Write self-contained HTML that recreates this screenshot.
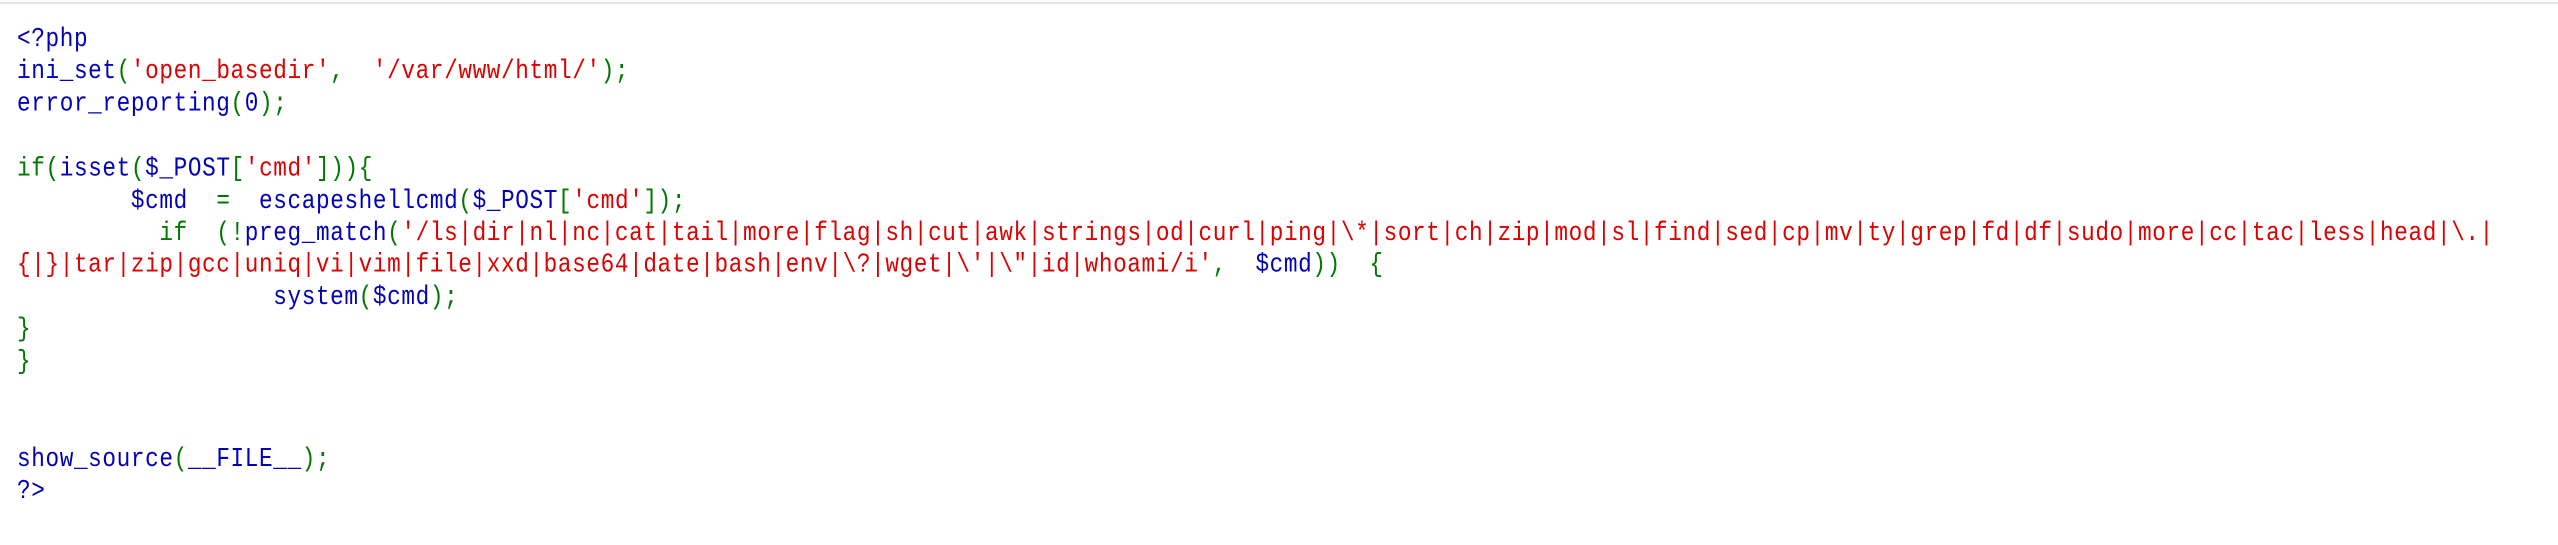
<!DOCTYPE html>
<html><head><meta charset="utf-8"><style>
html,body{margin:0;padding:0;background:#fff;width:2558px;height:545px;overflow:hidden}
.bar{position:absolute;left:0;top:2px;width:2558px;height:2px;background:#e6e6e6}
pre{position:absolute;left:17px;top:22.8px;margin:0;font-family:"Liberation Mono",monospace;font-size:22.7px;letter-spacing:0.62px;line-height:26.92px;white-space:pre;color:#0000BB;transform:scaleY(1.2);transform-origin:0 0}
.g{color:#007700}.r{color:#DD0000}.b{color:#0000BB}
</style></head><body>
<div class="bar"></div>
<pre><span class="b">&lt;?php</span>
<span class="b">ini_set</span><span class="g">(</span><span class="r">'open_basedir'</span><span class="g">,  </span><span class="r">'/var/www/html/'</span><span class="g">);</span>
<span class="b">error_reporting</span><span class="g">(</span><span class="b">0</span><span class="g">);</span>

<span class="g">if(</span><span class="b">isset</span><span class="g">(</span><span class="b">$_POST</span><span class="g">[</span><span class="r">'cmd'</span><span class="g">])){</span>
        <span class="b">$cmd  </span><span class="g">=  </span><span class="b">escapeshellcmd</span><span class="g">(</span><span class="b">$_POST</span><span class="g">[</span><span class="r">'cmd'</span><span class="g">]);</span>
          <span class="g">if  (!</span><span class="b">preg_match</span><span class="g">(</span><span class="r">'/ls|dir|nl|nc|cat|tail|more|flag|sh|cut|awk|strings|od|curl|ping|\*|sort|ch|zip|mod|sl|find|sed|cp|mv|ty|grep|fd|df|sudo|more|cc|tac|less|head|\.|</span>
<span class="r">{|}|tar|zip|gcc|uniq|vi|vim|file|xxd|base64|date|bash|env|\?|wget|\'|\"|id|whoami/i'</span><span class="g">,  </span><span class="b">$cmd</span><span class="g">))  {</span>
                  <span class="b">system</span><span class="g">(</span><span class="b">$cmd</span><span class="g">);</span>
<span class="g">}</span>
<span class="g">}</span>


<span class="b">show_source</span><span class="g">(</span><span class="b">__FILE__</span><span class="g">);</span>
<span class="b">?&gt;</span></pre>
</body></html>
